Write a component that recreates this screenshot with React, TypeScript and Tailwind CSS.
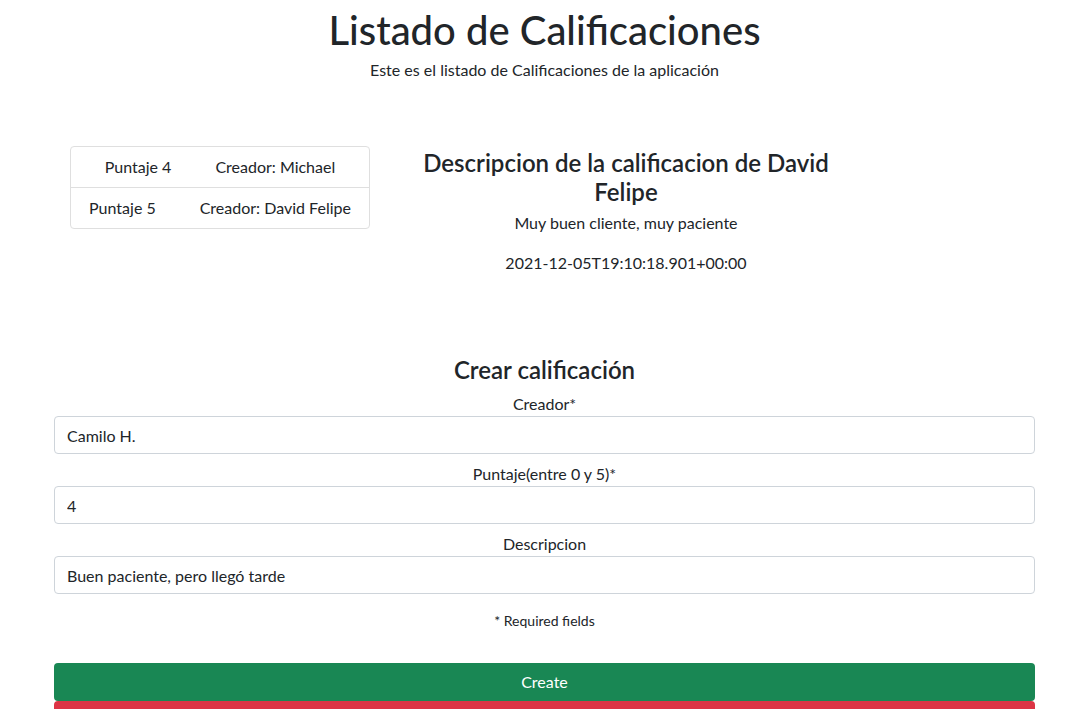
import React from "react";

const font = { fontFamily: '"Segoe UI", Lato, "Noto Sans", sans-serif' };

export default function App() {
  return (
    <div className="min-h-[709px] bg-white text-[#212529] text-[16px] leading-[24px]" style={font}>
      <div className="px-[54px] pt-[6px]">
        <h1 className="text-center text-[40px] leading-[48px] font-medium m-0">Listado de Calificaciones</h1>
        <p className="text-center mt-[4px]">Este es el listado de Calificaciones de la aplicación</p>

        <div className="flex mt-[64px]">
          <div className="pl-[16px] w-[316px]">
            <ul className="border border-[#dfdfdf] rounded-[4px] w-[300px]">
              <li className="flex justify-center gap-[44px] py-[8px] border-b border-[#dfdfdf]">
                <span>Puntaje 4</span>
                <span>Creador: Michael</span>
              </li>
              <li className="flex justify-center gap-[44px] py-[8px]">
                <span>Puntaje 5</span>
                <span>Creador: David Felipe</span>
              </li>
            </ul>
          </div>
          <div className="ml-[46px] w-[420px] text-center">
            <h4 className="text-[24px] leading-[29px] font-semibold mt-[2px] mb-[5px]">
              Descripcion de la calificacion de David Felipe
            </h4>
            <p className="mb-[16px]">Muy buen cliente, muy paciente</p>
            <p>2021-12-05T19:10:18.901+00:00</p>
          </div>
        </div>

        <h4 className="text-center text-[24px] leading-[29px] font-semibold mt-[80px]">Crear calificación</h4>
        <form className="flex flex-col">
          <label className="text-center mt-[8px]">Creador*</label>
          <input
            readOnly
            value="Camilo H."
            className="h-[38px] border border-[#ced4da] rounded-[4px] px-[12px] text-[16px] text-[#212529] outline-none"
            style={font}
          />
          <label className="text-center mt-[8px]">Puntaje(entre 0 y 5)*</label>
          <input
            readOnly
            value="4"
            className="h-[38px] border border-[#ced4da] rounded-[4px] px-[12px] text-[16px] text-[#212529] outline-none"
            style={font}
          />
          <label className="text-center mt-[8px]">Descripcion</label>
          <input
            readOnly
            value="Buen paciente, pero llegó tarde"
            className="h-[38px] border border-[#ced4da] rounded-[4px] px-[12px] text-[16px] text-[#212529] outline-none"
            style={font}
          />
          <p className="text-center text-[14px] leading-[21px] mt-[16px]">* Required fields</p>
          <button
            type="button"
            className="mt-[32px] h-[38px] bg-[#198754] text-white rounded-[4px] text-[16px]"
            style={font}
          >
            Create
          </button>
          <button
            type="button"
            className="h-[38px] bg-[#dc3545] text-white rounded-[4px] text-[16px]"
            style={font}
          >
            Delete
          </button>
        </form>
      </div>
    </div>
  );
}
